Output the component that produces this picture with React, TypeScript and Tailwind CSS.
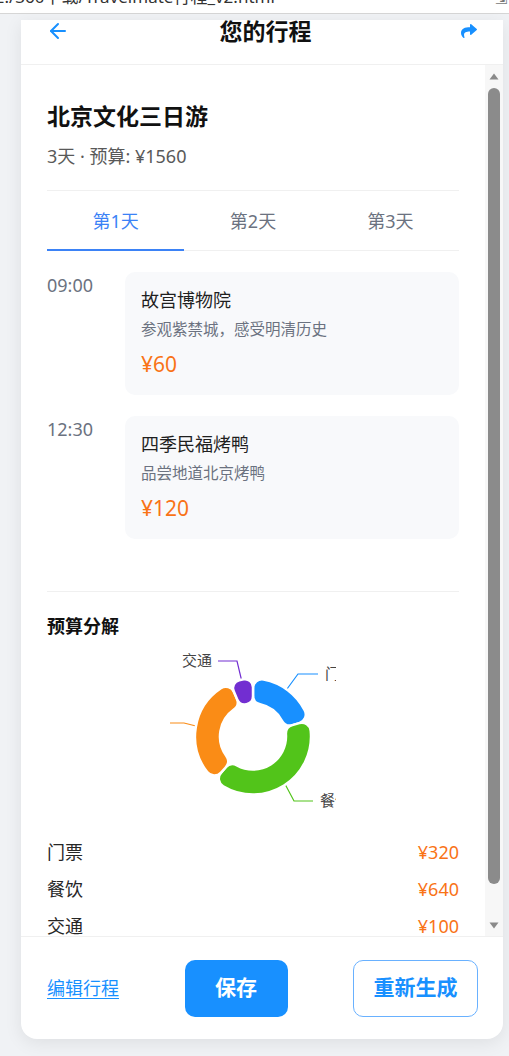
import { ArrowLeft } from "lucide-react";
import { FaShare } from "react-icons/fa";

const schedule = [
  { time: "09:00", title: "故宫博物院", desc: "参观紫禁城，感受明清历史", price: 60 },
  { time: "12:30", title: "四季民福烤鸭", desc: "品尝地道北京烤鸭", price: 120 },
];

const budget = [
  { name: "门票", value: 320, color: "#1890ff" },
  { name: "餐饮", value: 640, color: "#52c41a" },
  { name: "住宿", value: 500, color: "#fa8c16" },
  { name: "交通", value: 100, color: "#722ed1" },
];

// donut geometry (svg is 166 x 195)
const CX = 83;
const CY = 97.5;
const R = 58;
const r = 33;

function pt(rho: number, deg: number) {
  const a = (deg * Math.PI) / 180;
  return `${(CX + rho * Math.sin(a)).toFixed(2)} ${(CY - rho * Math.cos(a)).toFixed(2)}`;
}

// annular sector with rounded corners
function sector(a0: number, a1: number, want: number) {
  const span = ((a1 - a0) * Math.PI) / 180;
  let rc = want;
  while (
    rc > 0.5 &&
    (2 * Math.asin(rc / (R - rc)) > span * 0.98 || 2 * Math.asin(rc / (r + rc)) > span * 0.98)
  ) {
    rc -= 0.25;
  }
  const dO = (Math.asin(rc / (R - rc)) * 180) / Math.PI;
  const dI = (Math.asin(rc / (r + rc)) * 180) / Math.PI;
  const eO = (R - rc) * Math.cos((dO * Math.PI) / 180);
  const eI = (r + rc) * Math.cos((dI * Math.PI) / 180);
  const bigO = a1 - a0 - 2 * dO > 180 ? 1 : 0;
  const bigI = a1 - a0 - 2 * dI > 180 ? 1 : 0;
  return [
    `M ${pt(eO, a0)}`,
    `A ${rc} ${rc} 0 0 1 ${pt(R, a0 + dO)}`,
    `A ${R} ${R} 0 ${bigO} 1 ${pt(R, a1 - dO)}`,
    `A ${rc} ${rc} 0 0 1 ${pt(eO, a1)}`,
    `L ${pt(eI, a1)}`,
    `A ${rc} ${rc} 0 0 1 ${pt(r, a1 - dI)}`,
    `A ${r} ${r} 0 ${bigI} 0 ${pt(r, a0 + dI)}`,
    `A ${rc} ${rc} 0 0 1 ${pt(eI, a0)}`,
    "Z",
  ].join(" ");
}

function BudgetChart() {
  const total = budget.reduce((s, b) => s + b.value, 0);
  let acc = 0;
  const arcs = budget.map((b) => {
    const a0 = (acc / total) * 360;
    acc += b.value;
    const a1 = (acc / total) * 360;
    return { ...b, d: sector(a0, a1, 9) };
  });

  return (
    <svg width="166" height="195" viewBox="0 0 166 195" className="overflow-hidden">
      {/* leader lines */}
      <polyline points="117,50 128,35 148,35" fill="none" stroke="#1890ff" strokeWidth="1.2" />
      <polyline points="115,145 124,162 143,162" fill="none" stroke="#52c41a" strokeWidth="1.2" />
      <polyline points="26,87 14,84 0,84" fill="none" stroke="#fa8c16" strokeWidth="1.2" />
      <polyline points="72,43 67,22 48,22" fill="none" stroke="#722ed1" strokeWidth="1.2" />

      {arcs.map((a) => (
        <path key={a.name} d={a.d} fill={a.color} stroke="#fff" strokeWidth="2.5" strokeLinejoin="round" />
      ))}

      <g fontSize="15" fill="#444" fontFamily="'Noto Sans CJK SC', sans-serif">
        <text x="155" y="40">门票</text>
        <text x="150" y="167">餐饮</text>
        <text x="-6" y="89" textAnchor="end">住宿</text>
        <text x="42" y="27" textAnchor="end">交通</text>
      </g>
    </svg>
  );
}

function ScrollTrack() {
  return (
    <div className="w-[18px] shrink-0 bg-[#f7f7f7] flex flex-col items-center pt-[8px] pb-[7px]">
      <svg width="10" height="7" viewBox="0 0 10 7">
        <path d="M5 0.5 L9.5 6.5 L0.5 6.5 Z" fill="#8a8a8a" />
      </svg>
      <div className="mt-[8px] w-[12px] h-[796px] rounded-full bg-[#8b8b8b]" />
      <div className="flex-1" />
      <svg width="10" height="7" viewBox="0 0 10 7">
        <path d="M0.5 0.5 L9.5 0.5 L5 6.5 Z" fill="#8a8a8a" />
      </svg>
    </div>
  );
}

export default function App() {
  return (
    <div className="h-[1056px] overflow-hidden bg-[#f0f2f5] font-[family-name:'Noto_Sans','Noto_Sans_CJK_SC',sans-serif]">
      {/* browser address strip */}
      <div className="h-[14px] overflow-hidden bg-white border-b border-[#d6d6d6] flex justify-between">
        <div className="-mt-[13px] -ml-[5px] text-[17px] leading-[20px] text-[#333] whitespace-nowrap">
          E:/360下载/Travelmate行程_v2.html
        </div>
        <div className="-mt-[12px] mr-[1px] text-[15px] leading-[20px] text-[#777]">⇲</div>
      </div>

      <div className="mt-[6px] ml-[21px] w-[482px] bg-white rounded-b-[16px] shadow-[0_4px_18px_rgba(0,0,0,0.08)] flex flex-col overflow-hidden">
        {/* header */}
        <div className="h-[45px] shrink-0 border-b border-[#f0f0f0] pl-[25px] pr-[26px]">
          <div className="-mt-px h-[24px] flex items-center justify-between">
            <ArrowLeft size={24} strokeWidth={2} className="text-[#1890ff]" />
            <h1 className="text-[23px] leading-[24px] font-bold text-[#111]">您的行程</h1>
            <FaShare size={16} className="text-[#1890ff]" />
          </div>
        </div>

        {/* scroll body */}
        <div className="h-[871px] shrink-0 flex">
          <div className="flex-1 overflow-hidden">
            <div className="px-[26px] pb-[10px]">
              <div className="pt-[35px] pb-[21px] border-b border-[#f0f0f0]">
                <h2 className="text-[23px] leading-[32px] font-bold text-[#111]">北京文化三日游</h2>
                <p className="mt-[11px] text-[18px] leading-[26px] text-[#595959]">3天 · 预算: ¥1560</p>
              </div>

              {/* day tabs */}
              <div className="flex border-b border-[#f0f0f0]">
                {["第1天", "第2天", "第3天"].map((t, i) => (
                  <button
                    key={t}
                    className={
                      i === 0
                        ? "flex-1 h-[60px] pt-[2px] -mb-px border-b-2 border-[#3b82f6] text-[18px] text-[#3b82f6]"
                        : "flex-1 h-[60px] pt-[2px] -mb-px border-b-2 border-transparent text-[18px] text-[#6b7280]"
                    }
                  >
                    {t}
                  </button>
                ))}
              </div>

              {/* schedule */}
              <div className="mt-[21px] flex flex-col gap-[21px]">
                {schedule.map((s) => (
                  <div key={s.time} className="flex">
                    <div className="w-[78px] shrink-0 text-[18px] leading-[26px] text-[#6b7280]">{s.time}</div>
                    <div className="flex-1 bg-[#f8f9fb] rounded-[10px] pt-[15px] pb-[17px] px-[16px]">
                      <div className="text-[18px] leading-[26px] text-[#1f1f1f]">{s.title}</div>
                      <div className="mt-[5px] text-[15.5px] leading-[22px] text-[#6b7280]">{s.desc}</div>
                      <div className="mt-[10px] text-[21px] leading-[28px] text-[#f97316]">¥{s.price}</div>
                    </div>
                  </div>
                ))}
              </div>

              {/* budget */}
              <div className="mt-[52px] border-t border-[#f0f0f0] pt-[21px]">
                <h3 className="text-[18px] leading-[26px] font-bold text-[#111]">预算分解</h3>
                <div className="flex justify-center">
                  <BudgetChart />
                </div>
                <div>
                  {[budget[0], budget[1], budget[3], budget[2]].map((b) => (
                    <div key={b.name} className="h-[37px] flex items-center justify-between text-[18px]">
                      <span className="text-[#262626]">{b.name}</span>
                      <span className="text-[#f97316]">¥{b.value}</span>
                    </div>
                  ))}
                </div>
              </div>
            </div>
          </div>
          <ScrollTrack />
        </div>

        {/* footer */}
        <div className="h-[103px] shrink-0 border-t border-[#f0f0f0] flex items-center justify-between pl-[26px] pr-[25px]">
          <a className="text-[18px] text-[#1890ff] underline underline-offset-[3px] cursor-pointer">编辑行程</a>
          <button className="w-[103px] h-[57px] rounded-[10px] bg-[#1890ff] text-white text-[21px] font-bold">
            保存
          </button>
          <button className="w-[125px] h-[57px] rounded-[10px] border border-[#69b1ff] bg-white text-[#1890ff] text-[21px] font-bold">
            重新生成
          </button>
        </div>
      </div>
    </div>
  );
}
